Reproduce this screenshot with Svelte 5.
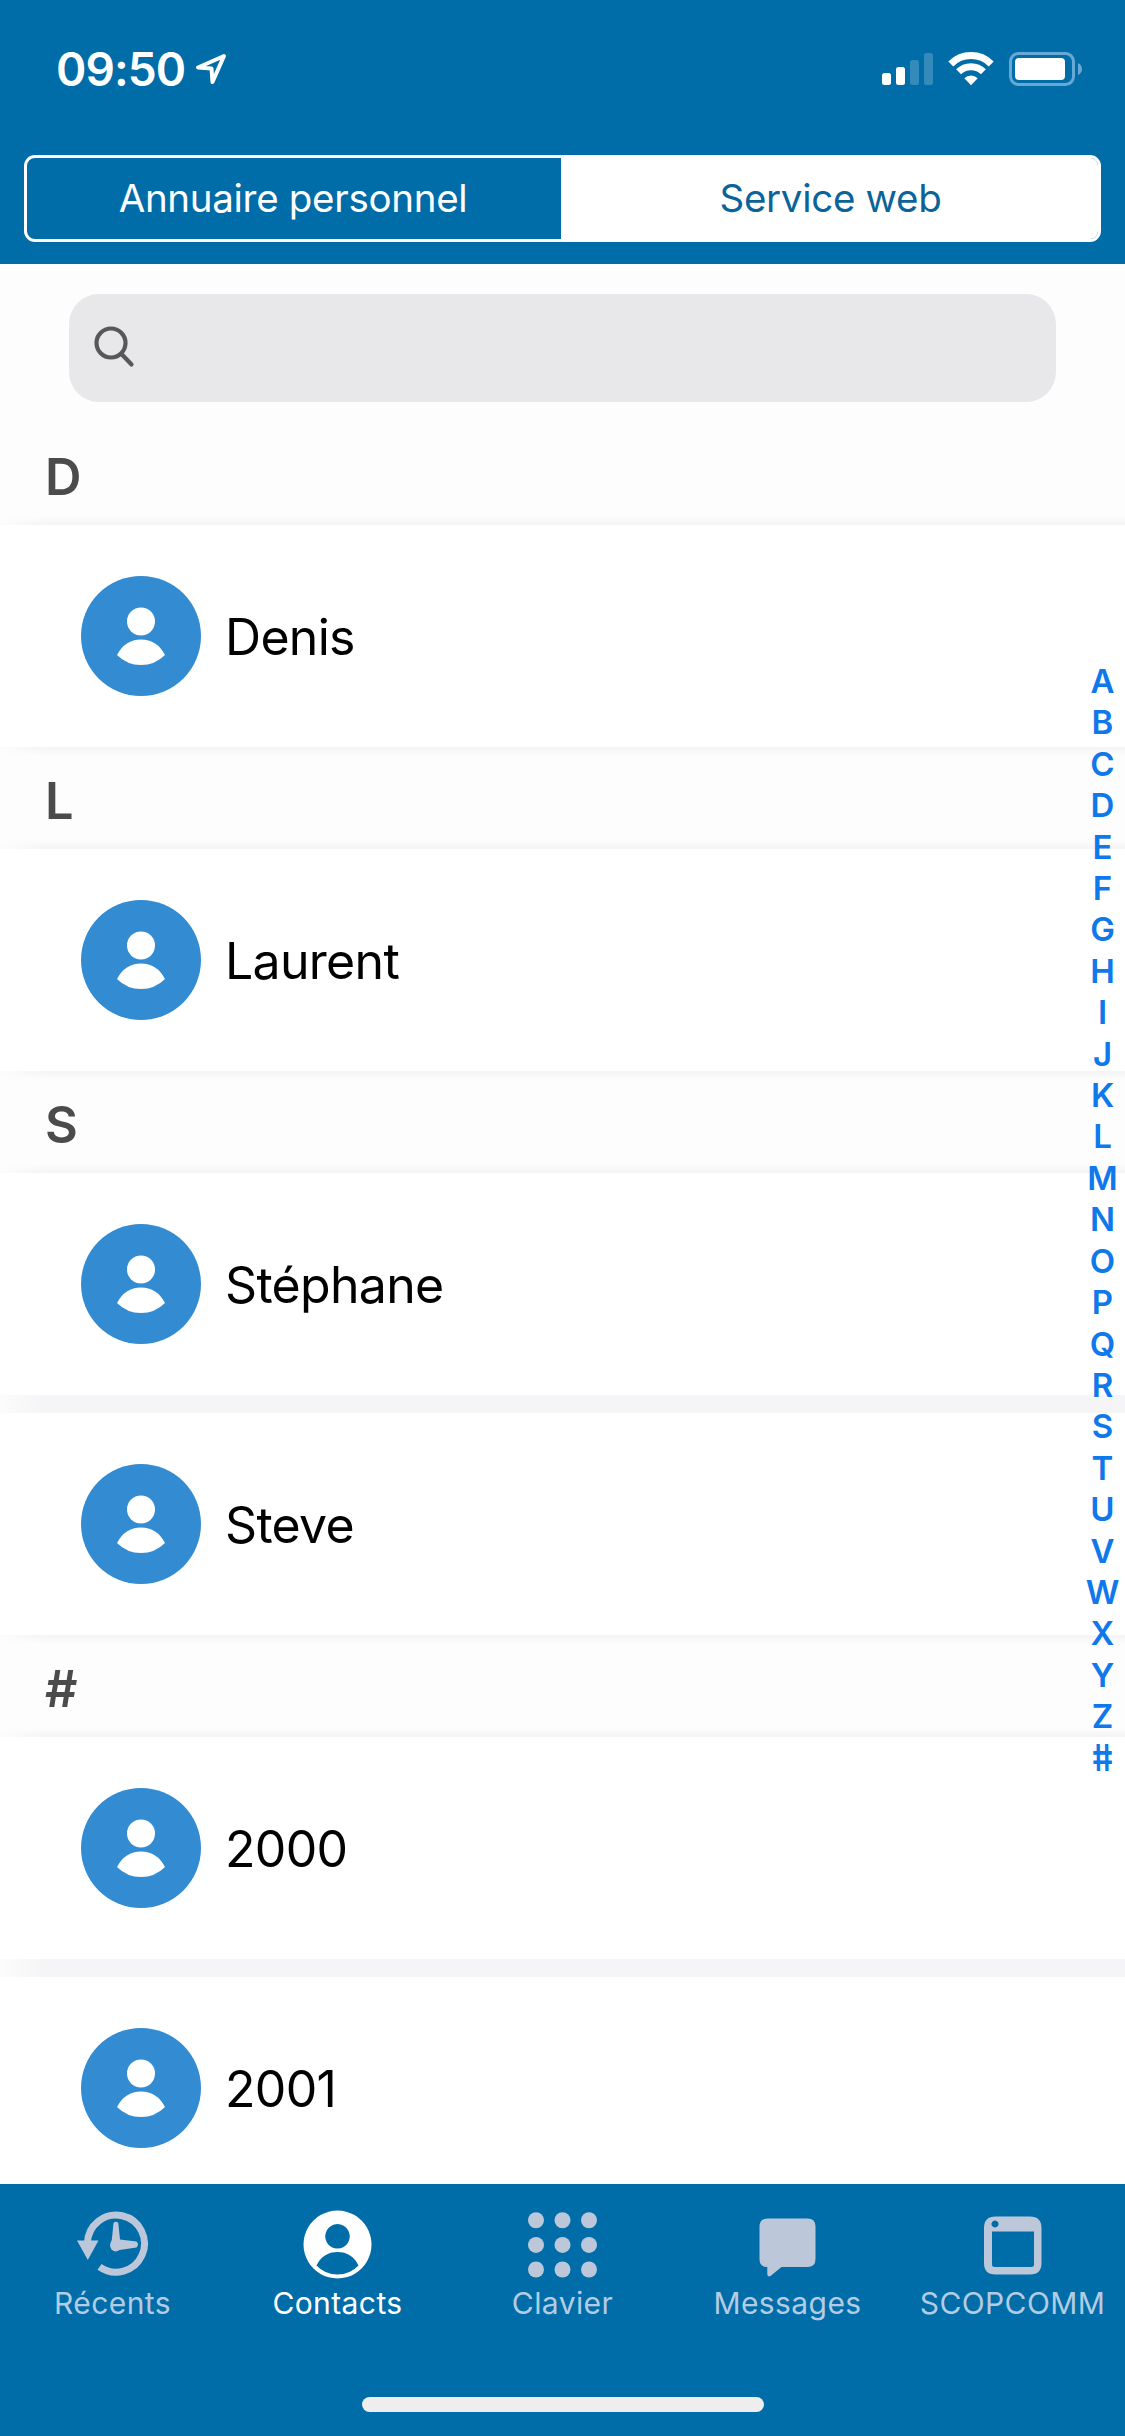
<script lang="ts">
	type Section = { letter: string; contacts: string[] };

	const sections: Section[] = [
		{ letter: 'D', contacts: ['Denis'] },
		{ letter: 'L', contacts: ['Laurent'] },
		{ letter: 'S', contacts: ['Stéphane', 'Steve'] },
		{ letter: '#', contacts: ['2000', '2001'] }
	];

	const alphabet = [...'ABCDEFGHIJKLMNOPQRSTUVWXYZ#'];
	const segments = ['Annuaire personnel', 'Service web'];
	const tabs = ['Récents', 'Contacts', 'Clavier', 'Messages', 'SCOPCOMM'];
	const dots = [11, 37.5, 64];

	let segment = $state('Service web');
	let tab = $state('Contacts');
</script>

<div class="screen">
	<header>
		<div class="status">
			<span class="time">09:50</span>
			<svg class="location" width="32" height="32" viewBox="0 0 32 32">
				<path d="M29 3 L3 14.5 L16.5 15.5 L17.5 29 Z" />
			</svg>
			<svg class="indicators" width="204" height="36" viewBox="0 0 204 36">
				<rect x="2" y="22" width="9" height="12" rx="2.5" />
				<rect x="16" y="16" width="9" height="18" rx="2.5" />
				<rect class="off" x="30" y="9" width="9" height="25" rx="2.5" />
				<rect class="off" x="44" y="2" width="9" height="32" rx="2.5" />
				<g class="waves">
					<path d="M70.8 13 A28.5 28.5 0 0 1 111.2 13" />
					<path d="M78.6 20.8 A17.5 17.5 0 0 1 103.4 20.8" />
				</g>
				<path d="M84.3 27.2 A9.6 9.6 0 0 1 97.7 27.2 L91 34.2 Z" />
				<rect class="case" x="130.5" y="2.5" width="63" height="31" rx="8" />
				<rect x="135" y="7" width="50" height="22" rx="4" />
				<path class="cap" d="M198 12 Q202 14 202 18 Q202 22 198 24 Z" />
			</svg>
		</div>
		<div class="segments">
			{#each segments as name}
				<button class:active={segment === name} onclick={() => (segment = name)}>{name}</button>
			{/each}
		</div>
	</header>

	<main>
		<div class="search">
			<svg width="42" height="42" viewBox="0 0 42 42">
				<circle cx="17" cy="17" r="14.5" />
				<path d="M27.5 28 L37.5 38.5" />
			</svg>
		</div>

		{#each sections as section}
			<h2>{section.letter}</h2>
			<div class="group">
				{#each section.contacts as contact}
					<div class="contact">
						<svg class="avatar" width="120" height="120" viewBox="0 0 120 120">
							<circle class="disc" cx="60" cy="60" r="60" />
							<circle cx="60" cy="45.5" r="14" />
							<path d="M36 79 Q44 63.5 60 63.5 Q76 63.5 84 79 Q74 89 60 89 Q46 89 36 79 Z" />
						</svg>
						<span class="name">{contact}</span>
					</div>
				{/each}
			</div>
		{/each}

		<nav class="index">
			{#each alphabet as letter}
				<span class:hash={letter === '#'}>{letter}</span>
			{/each}
		</nav>
	</main>

	<footer>
		<div class="tabs">
			{#each tabs as name}
				<button class="tab" class:active={tab === name} onclick={() => (tab = name)}>
					<svg width="75" height="75" viewBox="0 0 75 75">
						{#if name === 'Récents'}
							<path class="ring" d="M12.5 36 A28.5 28.5 0 1 1 24.5 59.8" />
							<path d="M2 33.5 H23.5 L12.8 53 Z" />
							<path d="M38.5 16 Q41 13.5 43.3 16 L45 32.5 L61.5 34.5 Q64.5 37.5 61.5 40.5 L44.5 43 Q40.5 46 36.5 42.5 Q33.5 38 36.8 33 Z" />
						{:else if name === 'Contacts'}
							<path
								fill-rule="evenodd"
								d="M37.5 3.5 a34 34 0 1 0 .01 0 Z M37.5 17 a12.3 12.3 0 1 1 -.01 0 Z M16.5 58.5 Q23 45 37.5 45 Q52 45 58.5 58.5 Q50 67.5 37.5 67.5 Q25 67.5 16.5 58.5 Z"
							/>
						{:else if name === 'Clavier'}
							{#each dots as y}
								{#each dots as x}
									<circle cx={x} cy={y * 0.93 + 3} r="8" />
								{/each}
							{/each}
						{:else if name === 'Messages'}
							<path d="M17.5 11.5 H57.5 Q65.5 11.5 65.5 19.5 V52 Q65.5 60 57.5 60 H31.5 L20.5 69 Q17.3 70.5 17.3 67 V60 Q9.5 60 9.5 52 V19.5 Q9.5 11.5 17.5 11.5 Z" />
						{:else}
							<path
								fill-rule="evenodd"
								d="M20.5 9.5 H55 Q66.5 9.5 66.5 21 V56 Q66.5 67.5 55 67.5 H20.5 Q9 67.5 9 56 V21 Q9 9.5 20.5 9.5 Z M17 24.5 V57.5 Q17 60 19.5 60 H56.5 Q59 60 59 57.5 V24.5 Z M20 13.5 a3.5 3.5 0 1 0 .01 0 Z"
							/>
						{/if}
					</svg>
					<span>{name}</span>
				</button>
			{/each}
		</div>
		<div class="home"></div>
	</footer>
</div>

<style>
	:global(body) {
		margin: 0;
	}

	.screen {
		width: 1125px;
		height: 2436px;
		display: flex;
		flex-direction: column;
		overflow: hidden;
		font-family: Inter, "Liberation Sans", sans-serif;
		background: #fdfdfd;
	}

	button {
		margin: 0;
		padding: 0;
		border: none;
		background: none;
		color: inherit;
		font: inherit;
	}

	header {
		flex: none;
		box-sizing: border-box;
		height: 264px;
		padding: 0 24px;
		background: #006ca8;
		color: white;
	}

	.status {
		height: 155px;
		box-sizing: border-box;
		padding: 39px 17px 56px 32px;
		display: flex;
		align-items: center;
	}

	.time {
		width: 128px;
		font-size: 46px;
		font-weight: 600;
		letter-spacing: -0.9px;
		line-height: 60px;
		white-space: nowrap;
	}

	.location {
		margin-left: 11px;
		fill: none;
		stroke: white;
		stroke-width: 4;
		stroke-linejoin: round;
	}

	.indicators {
		margin-left: auto;
		fill: white;
	}

	.indicators .off {
		fill: #338abb;
	}

	.waves {
		fill: none;
		stroke: white;
		stroke-width: 7;
	}

	.indicators .case {
		fill: none;
		stroke: #66a9d4;
		stroke-width: 3;
	}

	.indicators .cap {
		fill: #66a9d4;
	}

	.segments {
		box-sizing: border-box;
		height: 87px;
		display: flex;
		border: 3px solid white;
		border-radius: 11px;
		overflow: hidden;
	}

	.segments button {
		width: 534px;
		padding: 0 2px 1px 0;
		font-size: 38.5px;
		letter-spacing: -0.3px;
	}

	.segments .active {
		flex: 1;
		padding: 0 0 1px 2px;
		background: white;
		color: #0b6499;
	}

	main {
		position: relative;
		flex: 1;
		min-height: 0;
		overflow: hidden;
	}

	.search {
		box-sizing: border-box;
		height: 108px;
		margin: 30px 69px;
		padding: 32px 25px;
		border-radius: 30px;
		background: #e8e8ea;
	}

	.search svg {
		display: block;
		fill: none;
		stroke: #58585a;
		stroke-width: 4.2;
		stroke-linecap: round;
	}

	h2 {
		margin: 0;
		height: 84px;
		padding-left: 45px;
		color: #4b4b4b;
		font-size: 50.5px;
		font-weight: 640;
		line-height: 89px;
	}

	.group {
		padding: 9px 0;
		display: flex;
		flex-direction: column;
		gap: 18px;
		background:
			linear-gradient(#fdfdfd, #fdfdfd00 8px, #fdfdfd00 calc(100% - 8px), #fdfdfd),
			linear-gradient(to right, #fcfcfc, #f5f5f7 45px);
	}

	.contact {
		height: 222px;
		padding-left: 81px;
		display: flex;
		align-items: center;
		gap: 24px;
		background: white;
	}

	.avatar {
		fill: white;
	}

	.disc {
		fill: #338bd2;
	}

	.name {
		padding-top: 2px;
		font-size: 50px;
		letter-spacing: -0.7px;
	}

	.index {
		position: absolute;
		top: 397px;
		right: 0;
		width: 45px;
		display: flex;
		flex-direction: column;
		text-align: center;
		color: #0f78ea;
		font-size: 33px;
		font-weight: 600;
		line-height: 41.4px;
	}

	.hash {
		transform: skewX(9deg) scaleY(1.12);
	}

	footer {
		flex: none;
		height: 252px;
		background: #006ca8;
		color: #b3cce3;
	}

	.tabs {
		height: 213px;
		display: flex;
	}

	.tab {
		width: 225px;
		padding-top: 23px;
		display: flex;
		flex-direction: column;
		align-items: center;
		gap: 3px;
		font-size: 30px;
		font-weight: 430;
		letter-spacing: 0.4px;
	}

	.tab svg {
		fill: #bcc8d9;
		stroke: none;
	}

	.tab .ring {
		fill: none;
		stroke: #bcc8d9;
		stroke-width: 7;
	}

	.tab.active {
		color: white;
	}

	.tab.active svg {
		fill: white;
	}

	.home {
		width: 402px;
		height: 15px;
		margin: 0 auto;
		border-radius: 8px;
		background: #eee;
	}
</style>
